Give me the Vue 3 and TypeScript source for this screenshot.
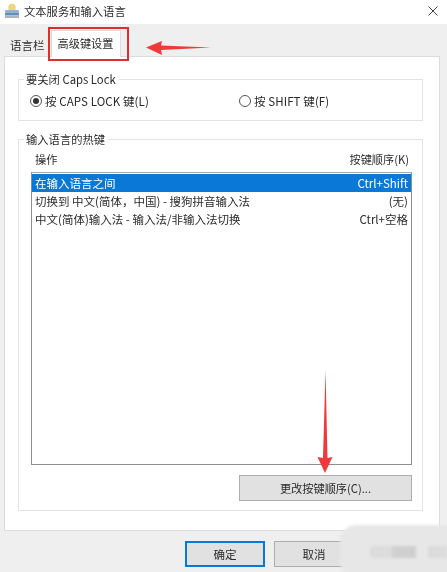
<script setup lang="ts">
interface Row { action: string; keys: string; selected?: boolean }
const rows: Row[] = [
  { action: '在输入语言之间', keys: 'Ctrl+Shift', selected: true },
  { action: '切换到 中文(简体，中国) - 搜狗拼音输入法', keys: '(无)' },
  { action: '中文(简体)输入法 - 输入法/非输入法切换', keys: 'Ctrl+空格' },
]
</script>

<template>
  <div class="dialog">
    <header class="titlebar">
      <svg class="app-icon" viewBox="0 0 16 16" width="16" height="16">
        <circle cx="8" cy="4.5" r="3.8" fill="#f0d67c" />
        <rect x="1" y="7" width="14" height="3" rx="1" fill="#8fb4d8" />
        <rect x="1" y="10" width="14" height="2.4" fill="#5f8fbd" />
        <rect x="1" y="12.4" width="14" height="2.6" fill="#a9b4bd" />
      </svg>
      <span class="title">文本服务和输入语言</span>
      <svg class="close" viewBox="0 0 10 10" width="10" height="10">
        <path d="M0.5 0.5 L9.5 9.5 M9.5 0.5 L0.5 9.5" stroke="#444" stroke-width="1" fill="none" />
      </svg>
    </header>

    <div class="body">
      <nav class="tabs">
        <span class="tab">语言栏</span>
        <span class="tab active">高级键设置</span>
      </nav>

      <section class="panel">
        <fieldset class="group caps">
          <legend>要关闭 Caps Lock</legend>
          <div class="radios">
            <label class="radio"><span class="dot on"></span>按 CAPS LOCK 键(L)</label>
            <label class="radio"><span class="dot"></span>按 SHIFT 键(F)</label>
          </div>
        </fieldset>

        <fieldset class="group hotkeys">
          <legend>输入语言的热键</legend>
          <div class="list-head">
            <span>操作</span>
            <span>按键顺序(K)</span>
          </div>
          <div class="list">
            <div v-for="row in rows" :key="row.action" class="row" :class="{ selected: row.selected }">
              <span>{{ row.action }}</span>
              <span>{{ row.keys }}</span>
            </div>
          </div>
          <div class="change-wrap">
            <button class="btn change">更改按键顺序(C)...</button>
          </div>
        </fieldset>
      </section>

      <footer class="footer">
        <button class="btn primary">确定</button>
        <button class="btn cancel">取消</button>
      </footer>
    </div>

    <div class="callout"></div>
    <svg class="arrow-left" viewBox="0 0 66 16" width="66" height="16">
      <path d="M0 7.5 L16 1 L15 5.5 L65 7.5 L15 10 L16 15 Z" fill="#ee3a3a" />
    </svg>
    <svg class="arrow-down" viewBox="0 0 18 106" width="18" height="106">
      <path d="M9.5 1 L11.5 89 L16.5 88 L9 104 L1.5 88 L7 89 Z" fill="#ee3a3a" />
    </svg>
    <div class="watermark">
      <i class="w1"></i><i class="w2"></i><i class="w3"></i>
    </div>
  </div>
</template>

<style scoped>
.dialog {
  position: relative;
  width: 447px;
  height: 572px;
  overflow: hidden;
  display: flex;
  flex-direction: column;
  background: #fff;
  color: #2b2b2b;
  font-family: "Noto Sans CJK SC", "Noto Sans", sans-serif;
  font-size: 11.5px;
  line-height: 18px;
  filter: blur(0.35px);
}
.titlebar {
  height: 24px;
  flex: none;
  display: flex;
  align-items: center;
  padding: 0 9px 2px 4px;
  box-sizing: border-box;
  background: #fff;
}
.app-icon { margin-right: 4px; }
.title { font-size: 11.3px; flex: 1; }
.body {
  flex: 1;
  display: flex;
  flex-direction: column;
  background: #efefef;
  padding: 0 7px 0 4px;
  min-height: 0;
}
.tabs {
  height: 32px;
  flex: none;
  display: flex;
  align-items: flex-end;
  padding-left: 6px;
}
.tab {
  height: 22px;
  line-height: 22px;
  padding: 0 1px 0 0;
  width: 40px;
  font-size: 11.5px;
}
.tab.active {
  width: 70px;
  height: 27px;
  line-height: 25px;
  margin-bottom: -1px;
  background: #fff;
  text-align: center;
  border: 1px solid #dcdcdc;
  border-bottom: none;
  box-sizing: border-box;
  position: relative;
  z-index: 1;
  font-size: 11.2px;
}
.panel {
  height: 475px;
  flex: none;
  box-sizing: border-box;
  background: #fff;
  border: 1px solid #dcdcdc;
  padding: 14px 16px 0 13px;
  display: flex;
  flex-direction: column;
}
.group {
  margin: 0;
  padding: 0 10px 0 12px;
  border: 1px solid #e3e3e3;
  min-width: 0;
}
.group legend {
  padding: 0 3px 0 2px;
  margin-left: -7px;
  line-height: 16px;
  height: 16px;
  font-size: 11.3px;
}
.caps {
  height: 50px;
  box-sizing: border-box;
  flex: none;
}
.radios {
  display: flex;
  padding-top: 6px;
  margin-left: -1px;
}
.radio {
  display: flex;
  align-items: center;
  flex: none;
  width: 209px;
  height: 16px;
  gap: 3px;
  letter-spacing: 0.1px;
}
.dot {
  width: 12px;
  height: 12px;
  box-sizing: border-box;
  border-radius: 50%;
  border: 1px solid #555;
  background: #fff;
  position: relative;
  flex: none;
}
.dot.on::after {
  content: "";
  position: absolute;
  left: 2px;
  top: 2px;
  width: 6px;
  height: 6px;
  border-radius: 50%;
  background: #333;
}
.hotkeys {
  margin-top: 10px;
  height: 380px;
  box-sizing: border-box;
  flex: none;
  display: flex;
  flex-direction: column;
}
.list-head {
  display: flex;
  justify-content: space-between;
  padding: 3px 3px 0 4px;
  height: 25px;
  box-sizing: border-box;
  line-height: 18px;
  flex: none;
  font-size: 11.2px;
}
.list {
  height: 293px;
  flex: none;
  box-sizing: border-box;
  border: 1px solid #8e8e8e;
  border-top-color: #aaa;
  background: #fff;
  padding-top: 1px;
}
.row {
  display: flex;
  justify-content: space-between;
  height: 18px;
  line-height: 18px;
  padding: 0 3px 0 3px;
}
.row.selected {
  background: #0a78d7;
  color: #fff;
}
.change-wrap {
  display: flex;
  justify-content: flex-end;
  margin-top: 10px;
}
.btn {
  font: inherit;
  color: inherit;
  box-sizing: border-box;
  background: #e1e1e1;
  border: 1px solid #adadad;
  padding: 0;
  height: 26px;
}
.change { width: 173px; font-size: 11.2px; }
.footer {
  flex: 1;
  display: flex;
  gap: 9px;
  padding: 10px 0 0 181px;
}
.footer .btn { width: 80px; }
.primary { border: 2px solid #0a78d7; }
.callout {
  position: absolute;
  left: 48px;
  top: 27px;
  width: 81px;
  height: 34px;
  box-sizing: border-box;
  border: 2px solid #e02e2e;
  z-index: 2;
}
.arrow-left { position: absolute; left: 146px; top: 40px; z-index: 2; }
.arrow-down { position: absolute; left: 316px; top: 369px; z-index: 2; }
.watermark {
  position: absolute;
  left: 340px;
  top: 525px;
  width: 130px;
  height: 52px;
  border-radius: 16px;
  background: #e7e7e7;
  filter: blur(1.5px);
  z-index: 3;
}
.watermark i {
  position: absolute;
  top: 21px;
  height: 12px;
  background: #dcdcdc;
}
.w1 { left: 30px; width: 22px; }
.w2 { left: 52px; width: 24px; background: #cfcfcf !important; }
.w3 { left: 88px; width: 19px; }
</style>
